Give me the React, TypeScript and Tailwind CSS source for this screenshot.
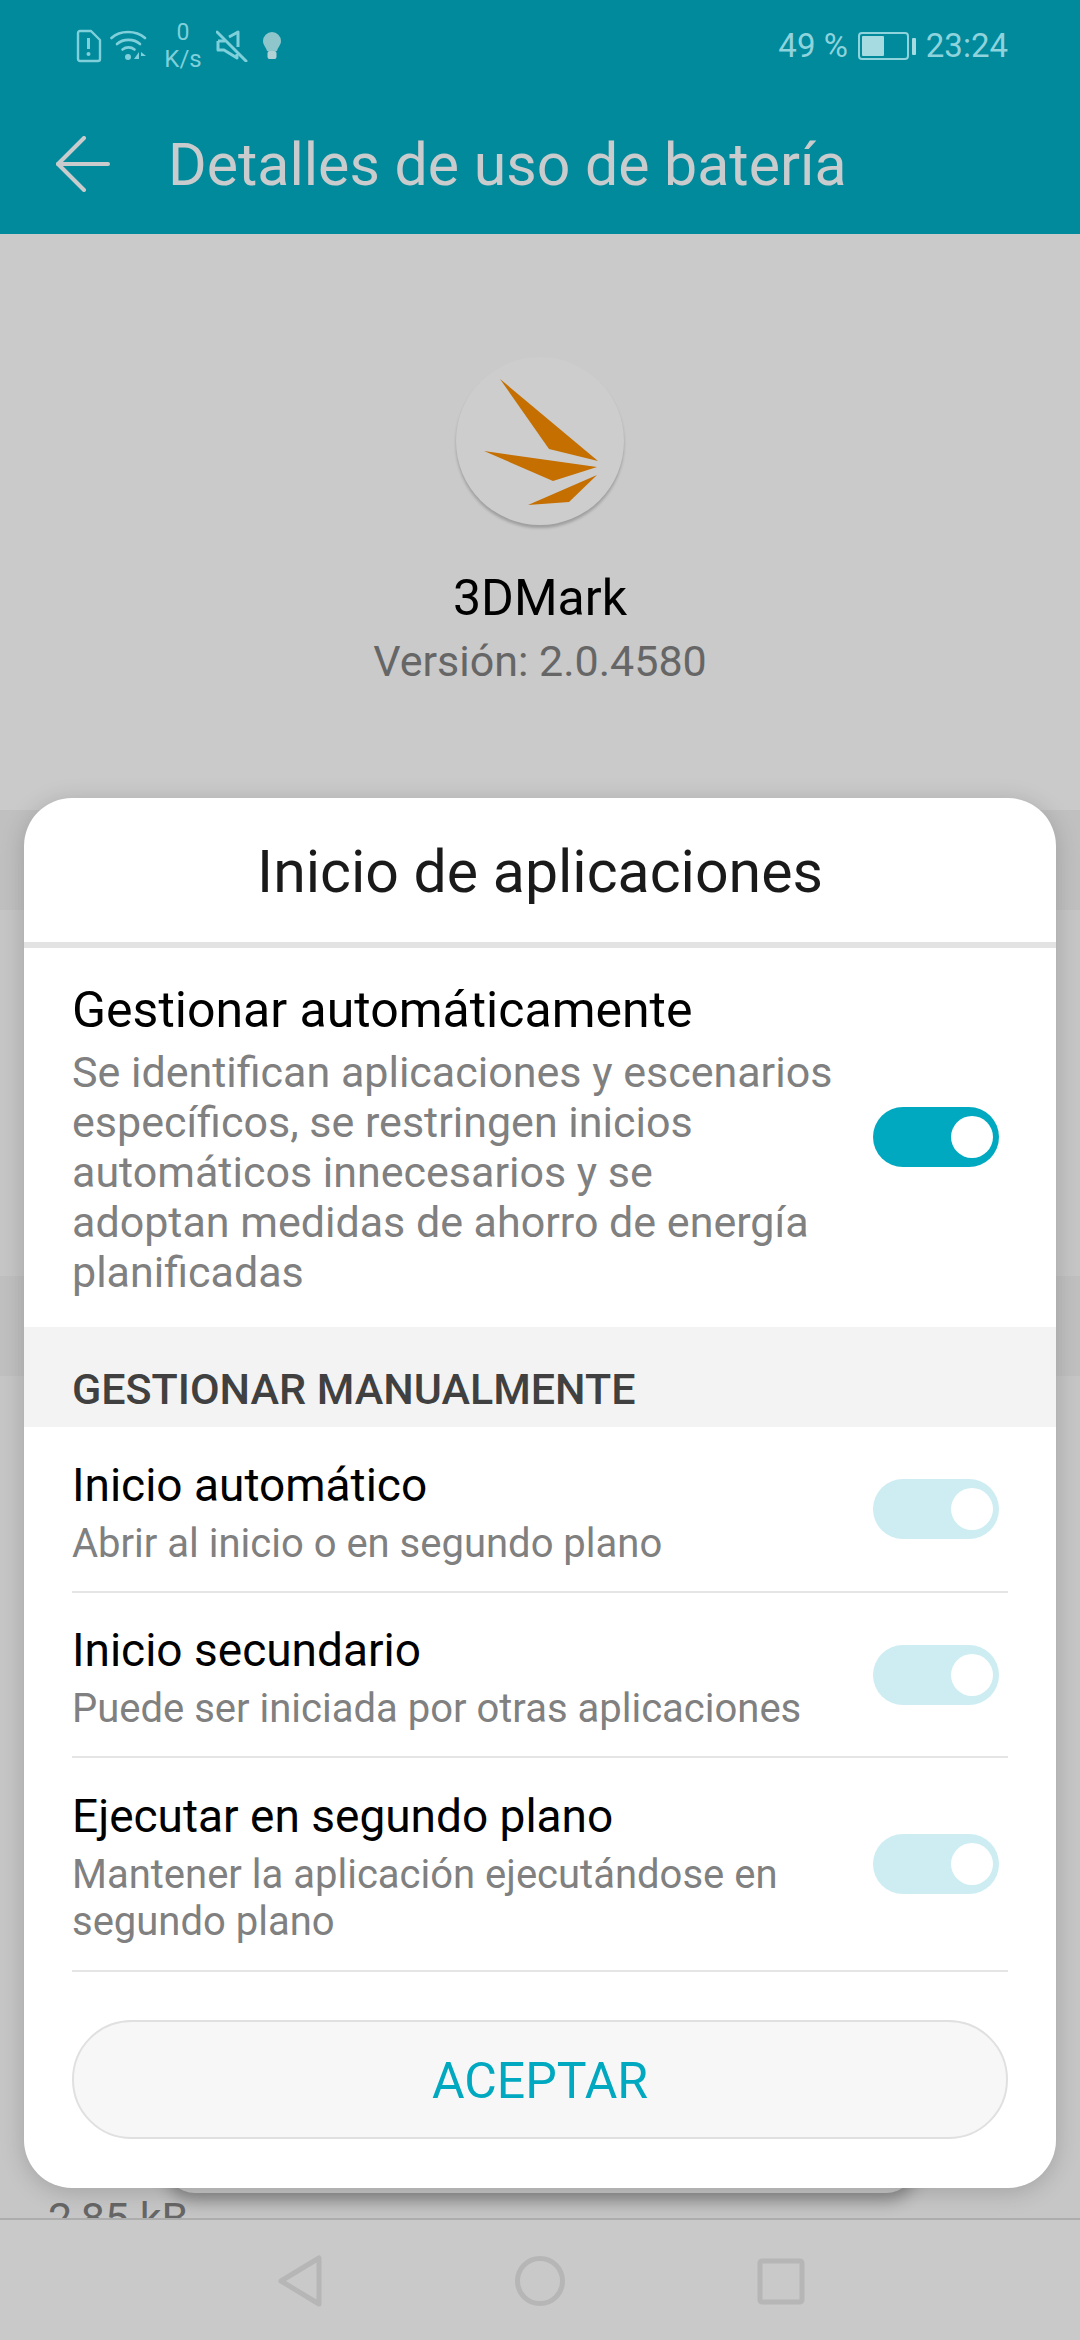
import React from 'react';

const font = { fontFamily: 'Roboto, sans-serif' };

function SimAlert() {
  return (
    <svg width="26" height="34" viewBox="0 0 26 34" fill="none" stroke="#7fd0da" strokeWidth="2.4">
      <path d="M4 2h11l9 9v19a2 2 0 0 1-2 2H4a2 2 0 0 1-2-2V4a2 2 0 0 1 2-2z" strokeLinejoin="round" />
      <path d="M12.5 9v11" strokeWidth="3" />
      <circle cx="12.5" cy="25" r="2" fill="#7fd0da" stroke="none" />
    </svg>
  );
}

function Wifi() {
  return (
    <svg width="37" height="32" viewBox="0 0 37 32" fill="none" stroke="#7fd0da" strokeWidth="2.6" strokeLinecap="round">
      <path d="M1.500 8C10 0 26 0 35 8" />
      <path d="M7 14c6-5.500 17-5.500 23 0" />
      <path d="M12.500 19.500c3.500-2.800 8.500-2.800 12 0" />
      <circle cx="18" cy="27" r="3" fill="#7fd0da" stroke="none" />
      <path d="M29 22l-5 7h5z" fill="#7fd0da" stroke="none" />
      <path d="M31 31V22l5 4h-5z" fill="#7fd0da" stroke="none" />
    </svg>
  );
}

function Muted() {
  return (
    <svg width="32" height="32" viewBox="0 0 32 32" fill="none" stroke="#7fd0da" strokeWidth="3" strokeLinejoin="round">
      <path d="M2 11h7M2 11v9h6l13 8v-4" />
      <path d="M13 7l9-5v15" />
      <path d="M1 2l29 29" strokeLinecap="round" />
    </svg>
  );
}

function Bulb() {
  return (
    <svg width="20" height="30" viewBox="0 0 20 30">
      <path d="M10 1a9 9 0 0 0-9 9c0 4 3 6 4 10h10c1-4 4-6 4-10a9 9 0 0 0-9-9z" fill="#8fc6cc" />
      <rect x="5.500" y="20" width="9" height="8" rx="2" fill="#b4d2d5" />
    </svg>
  );
}

function BackArrow() {
  return (
    <svg width="54" height="56" viewBox="0 0 54 56" fill="none" stroke="#c9cbcc" strokeWidth="4" strokeLinecap="round" strokeLinejoin="round">
      <path d="M28 2L2 28l26 26" />
      <path d="M2 28h50" />
    </svg>
  );
}

function AppLogo() {
  return (
    <svg width="168" height="168" viewBox="456 357 168 168">
      <polygon points="500,379 598,461 549,449" fill="#c46f00" />
      <polygon points="484,451 597,467 553,481" fill="#c46f00" />
      <polygon points="528,505 597,475 569,502" fill="#c46f00" />
    </svg>
  );
}

function Toggle({ faded }: { faded?: boolean }) {
  return (
    <div className={`flex h-[60px] w-[126px] shrink-0 items-center justify-end rounded-full pr-[6px] ${faded ? 'bg-[#cdedf2]' : 'bg-[#00a9c0]'}`}>
      <div className="h-[42px] w-[42px] rounded-full bg-white" />
    </div>
  );
}

function ManualRow({ title, sub, height }: { title: string; sub: string[]; height: string }) {
  return (
    <div className={`mx-[48px] flex items-center justify-between border-b-2 border-[#e5e5e5] ${height}`}>
      <div className="pt-[6px]">
        <div className="mb-[8px] text-[46px] leading-[54px] text-black">{title}</div>
        {sub.map((line) => (
          <div key={line} className="text-[40px] leading-[47px] text-[#808080]">
            {line}
          </div>
        ))}
      </div>
      <div className="mr-[9px]">
        <Toggle faded />
      </div>
    </div>
  );
}

export default function App() {
  return (
    <div className="relative flex h-[2340px] w-[1080px] flex-col overflow-hidden bg-[#c6c6c6]" style={font}>
      {/* header */}
      <div className="h-[234px] bg-[#008a9c]">
        <div className="flex h-[92px] items-center justify-between pl-[76px] pr-[72px]">
          <div className="flex items-center">
            <SimAlert />
            <div className="ml-[8px]">
              <Wifi />
            </div>
            <div className="ml-[18px] flex w-[36px] flex-col items-center text-[#7fd0da]">
              <span className="text-[23px] leading-[26px]">0</span>
              <span className="text-[24px] leading-[26px]">K/s</span>
            </div>
            <div className="ml-[15px]">
              <Muted />
            </div>
            <div className="ml-[14px]">
              <Bulb />
            </div>
          </div>
          <div className="flex items-center text-[33px] text-[#8fd3dc]">
            <span>49 %</span>
            <div className="ml-[10px] flex h-[28px] w-[51px] items-center rounded-[4px] border-2 border-[#8fd3dc] p-[2px]">
              <div className="h-full w-[22px] rounded-[1px] bg-[#a5dbe1]" />
            </div>
            <div className="ml-[3px] h-[17px] w-[4px] rounded-[1px] bg-[#a5dbe1]" />
            <span className="ml-[10px]">23:24</span>
          </div>
        </div>
        <div className="flex h-[142px] items-center pt-[2px] pl-[56px]">
          <BackArrow />
          <span className="ml-[58px] text-[59px] leading-none text-[#c9cbcc]">Detalles de uso de batería</span>
        </div>
      </div>

      {/* page behind the sheet */}
      <div className="h-[576px] bg-[#cacaca] pt-[123px]">
        <div className="flex flex-col items-center">
          <div className="h-[168px] w-[168px] rounded-full bg-[#cdcdcd] shadow-[0_3px_3px_rgba(0,0,0,0.22)]">
            <AppLogo />
          </div>
          <div className="mt-[44px] text-[50px] leading-[58px] text-black">3DMark</div>
          <div className="mt-[8px] text-[43px] leading-[52px] text-[#666666]">Versión: 2.0.4580</div>
        </div>
      </div>
      <div className="h-[100px] bg-[#c0c0c0]" />
      <div className="h-[366px] bg-[#c6c6c6]" />
      <div className="h-[100px] bg-[#c0c0c0]" />
      <div className="relative flex-1 bg-[#c6c6c6]">
        <div className="absolute bottom-[25px] left-[165px] h-[40px] w-[751px] rounded-b-[30px] bg-[#c6c6c6] shadow-[0_8px_16px_rgba(0,0,0,0.3)]" />
        <div className="absolute bottom-[-25px] left-[48px] text-[43px] leading-[50px] text-[#666666]">2,85 kB</div>
      </div>

      {/* nav bar */}
      <div className="relative flex h-[122px] items-center justify-center border-t-2 border-[#adadad] bg-[#c9c9c9]">
        <svg width="530" height="56" viewBox="275 2250 530 56" fill="none" stroke="#b6b6b6" strokeWidth="5" strokeLinejoin="round">
          <path d="M319 2256v46l-38-23z" />
          <circle cx="540" cy="2279" r="22.500" />
          <rect x="760" y="2259" width="42" height="41" rx="2" />
        </svg>
      </div>

      {/* sheet */}
      <div className="absolute left-[24px] top-[798px] h-[1390px] w-[1032px] overflow-hidden rounded-[48px] bg-white shadow-[0_4px_24px_rgba(0,0,0,0.18)]">
        <div className="flex h-[150px] items-center justify-center border-b-[6px] border-[#e3e3e3] pt-[5px] text-[59px] text-[#1a1a1a]">
          Inicio de aplicaciones
        </div>
        <div className="flex h-[379px] items-center pl-[48px] pr-[57px]">
          <div className="h-full w-[790px] pt-[33px]">
            <div className="text-[50px] leading-[58px] text-black">Gestionar automáticamente</div>
            <div className="mt-[8px] text-[43px] leading-[50px] text-[#808080]">
              <div>Se identifican aplicaciones y escenarios</div>
              <div>específicos, se restringen inicios</div>
              <div>automáticos innecesarios y se</div>
              <div>adoptan medidas de ahorro de energía</div>
              <div>planificadas</div>
            </div>
          </div>
          <div className="mb-[2px] ml-auto">
            <Toggle />
          </div>
        </div>
        <div className="flex h-[100px] items-end bg-[#f3f3f3] pb-[14px] pl-[48px] text-[43px] font-medium leading-[48px] text-[#404040]">
          GESTIONAR MANUALMENTE
        </div>
        <ManualRow title="Inicio automático" sub={['Abrir al inicio o en segundo plano']} height="h-[166px]" />
        <ManualRow title="Inicio secundario" sub={['Puede ser iniciada por otras aplicaciones']} height="h-[165px]" />
        <ManualRow
          title="Ejecutar en segundo plano"
          sub={['Mantener la aplicación ejecutándose en', 'segundo plano']}
          height="h-[214px]"
        />
        <div className="mx-[48px] mt-[48px] flex h-[119px] items-center justify-center rounded-full border-2 border-[#e0e0e0] bg-[#f7f7f7] pt-[4px] text-[50px] text-[#00a9c0]">
          ACEPTAR
        </div>
      </div>
    </div>
  );
}
